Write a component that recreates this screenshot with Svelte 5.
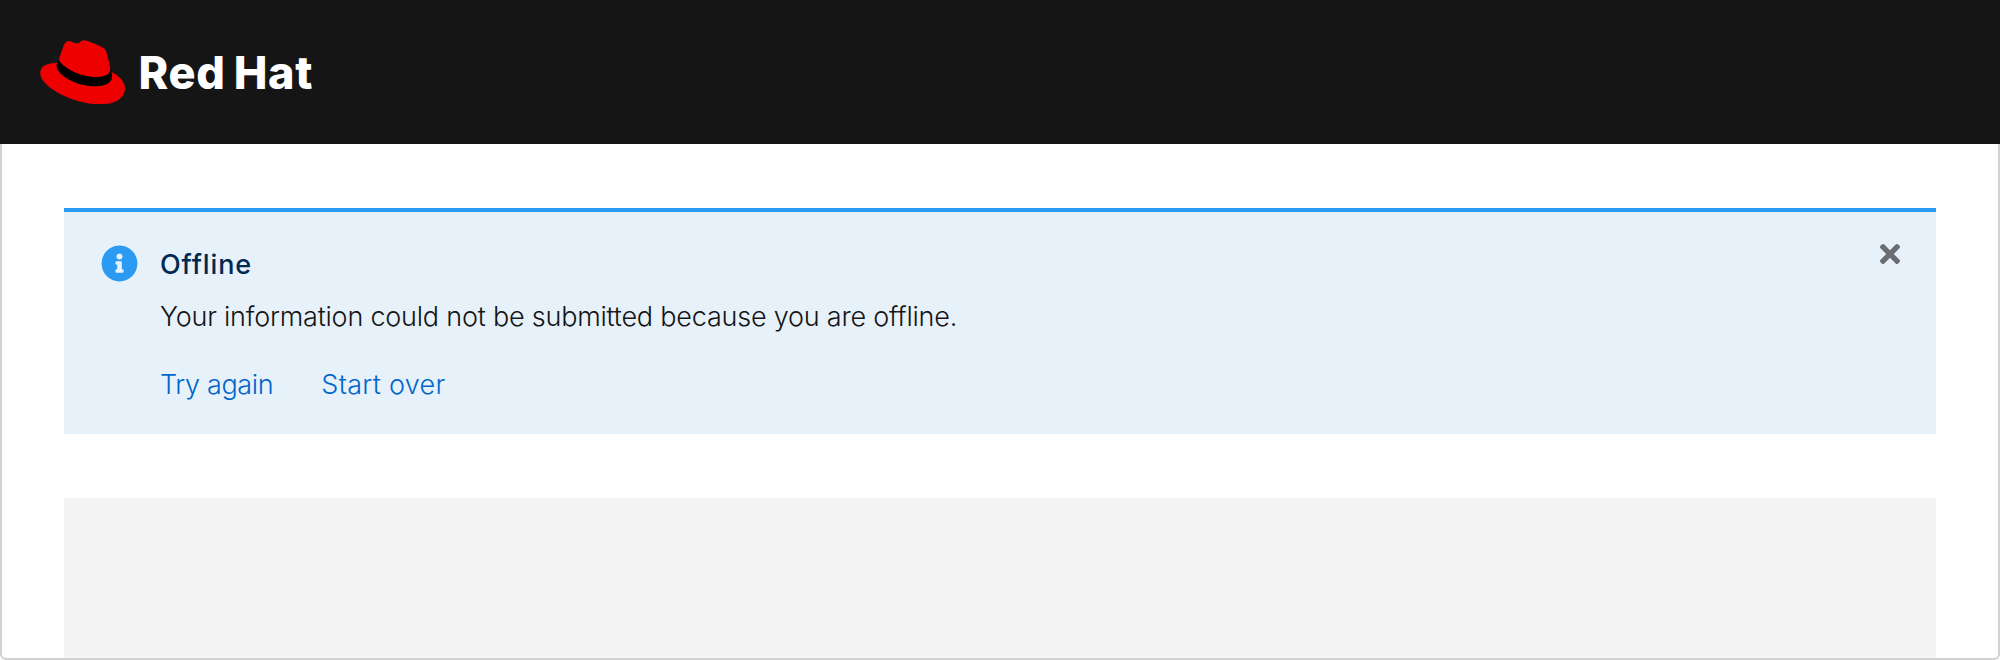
<script>
  let open = $state(true);
</script>

<div class="page">
  <header>
    <svg class="hat" viewBox="0 0 191 145" aria-hidden="true">
      <path fill="#e00" d="M127.47,83.49c12.51,0,30.61-2.58,30.61-17.46a14,14,0,0,0-.31-3.42l-7.45-32.36c-1.72-7.12-3.23-10.35-15.73-16.6C124.89,8.69,103.76.5,97.51.5,91.69.5,90,8,83.06,8c-6.68,0-11.64-5.6-17.89-5.6-6,0-9.91,4.09-12.93,12.5,0,0-8.41,23.72-9.49,27.16A6.43,6.43,0,0,0,42.53,44c0,9.22,36.3,39.45,84.94,39.45M160,72.07c1.73,8.19,1.73,9.05,1.73,10.13,0,14-15.74,21.77-36.43,21.77C78.54,104,37.58,76.6,37.58,58.49a18.45,18.45,0,0,1,1.51-7.33C22.27,52,.5,55,.5,74.22c0,31.48,74.59,70.28,133.65,70.28,45.28,0,56.7-20.48,56.7-36.65,0-12.72-11-27.16-30.83-35.78" />
      <path fill="#000" d="M160,72.07c1.73,8.19,1.73,9.05,1.73,10.13,0,14-15.74,21.77-36.43,21.77C78.54,104,37.58,76.6,37.58,58.49a18.45,18.45,0,0,1,1.51-7.33l3.66-9.06A6.43,6.43,0,0,0,42.53,44c0,9.22,36.3,39.45,84.94,39.45,12.51,0,30.61-2.58,30.61-17.46a14,14,0,0,0-.31-3.42Z" />
    </svg>
    <div class="wordmark"><span>Red</span> <span>Hat</span></div>
  </header>

  <main>
    {#if open}
      <section class="alert">
        <svg class="info" viewBox="0 0 512 512" aria-hidden="true">
          <path fill="#2b9af3" d="M256 8C119 8 8 119 8 256s111 248 248 248 248-111 248-248S393 8 256 8zm0 110c23.200 0 42 18.800 42 42s-18.800 42-42 42-42-18.800-42-42 18.800-42 42-42zm56 254c0 6.600-5.400 12-12 12h-88c-6.600 0-12-5.400-12-12v-24c0-6.600 5.400-12 12-12h12v-64h-12c-6.600 0-12-5.400-12-12v-24c0-6.600 5.400-12 12-12h64c6.600 0 12 5.400 12 12v100h12c6.600 0 12 5.400 12 12z" />
        </svg>
        <div class="content">
          <h4>Offline</h4>
          <p>Your information could not be submitted because you are offline.</p>
          <div class="actions">
            <button class="try">Try again</button>
            <button class="over">Start over</button>
          </div>
        </div>
        <button class="close" aria-label="Close" onclick={() => (open = false)}>
          <svg viewBox="0 80 352 352" aria-hidden="true">
            <path fill="#6a6e73" d="M242.720 256l100.070-100.070c12.280-12.280 12.280-32.190 0-44.480l-22.240-22.240c-12.280-12.280-32.190-12.280-44.480 0L176 189.280 75.930 89.210c-12.280-12.280-32.190-12.280-44.480 0L9.210 111.450c-12.280 12.280-12.280 32.190 0 44.480L109.280 256 9.210 356.070c-12.280 12.280-12.280 32.190 0 44.480l22.240 22.240c12.280 12.280 32.200 12.280 44.480 0L176 322.720l100.070 100.070c12.280 12.280 32.200 12.280 44.480 0l22.240-22.240c12.280-12.280 12.280-32.190 0-44.480L242.720 256z" />
          </svg>
        </button>
      </section>
    {/if}
    <div class="placeholder"></div>
  </main>
</div>

<style>
  :global(body) {
    background: #fff;
  }
  .page {
    height: 660px;
    display: flex;
    flex-direction: column;
    font-family: Inter, "Liberation Sans", sans-serif;
    box-sizing: border-box;
  }
  header {
    height: 144px;
    box-sizing: border-box;
    padding-left: 40px;
    background: #151515;
    display: flex;
    align-items: center;
    flex: none;
  }
  .hat {
    width: 85px;
    height: 64.5px;
    margin-right: 13.5px;
  }
  .wordmark {
    display: flex;
    gap: 8px;
    margin-top: 2px;
    color: #fff;
    font-size: 45px;
    font-weight: 800;
    line-height: 56px;
    letter-spacing: 0.7px;
  }
  main {
    flex: 1;
    display: flex;
    flex-direction: column;
    gap: 64px;
    padding: 64px 62px 0;
    border: 2px solid #d2d2d2;
    border-top: 0;
    border-radius: 0 0 6px 6px;
  }
  .alert {
    height: 226px;
    box-sizing: border-box;
    border-top: 4px solid #2b9af3;
    background: #e7f1fa;
    display: flex;
    align-items: flex-start;
    padding: 32px 32px 0 37px;
  }
  .info {
    width: 37px;
    height: 37px;
    margin-top: 1px;
    margin-right: 22px;
    flex: none;
  }
  .content {
    flex: 1;
  }
  h4,
  p {
    margin: 0;
    line-height: 42px;
  }
  h4 {
    font-size: 27px;
    font-weight: 500;
    letter-spacing: 0.9px;
    color: #002952;
  }
  p {
    margin-top: 10px;
    font-size: 27px;
    font-weight: 300;
    letter-spacing: -0.22px;
    color: #151515;
  }
  .actions {
    display: flex;
    gap: 48px;
    margin-top: 26px;
  }
  button {
    border: 0;
    padding: 0;
    background: none;
    font: inherit;
    cursor: pointer;
  }
  .actions button {
    font-size: 27px;
    font-weight: 300;
    line-height: 42px;
    color: #06c;
  }
  .actions .try {
    letter-spacing: -0.35px;
  }
  .actions .over {
    letter-spacing: 0.3px;
  }
  .close {
    display: flex;
    margin-right: 4px;
  }
  .close svg {
    width: 20px;
    height: 20px;
  }
  .placeholder {
    flex: 1;
    background: #f4f4f4;
  }
</style>
